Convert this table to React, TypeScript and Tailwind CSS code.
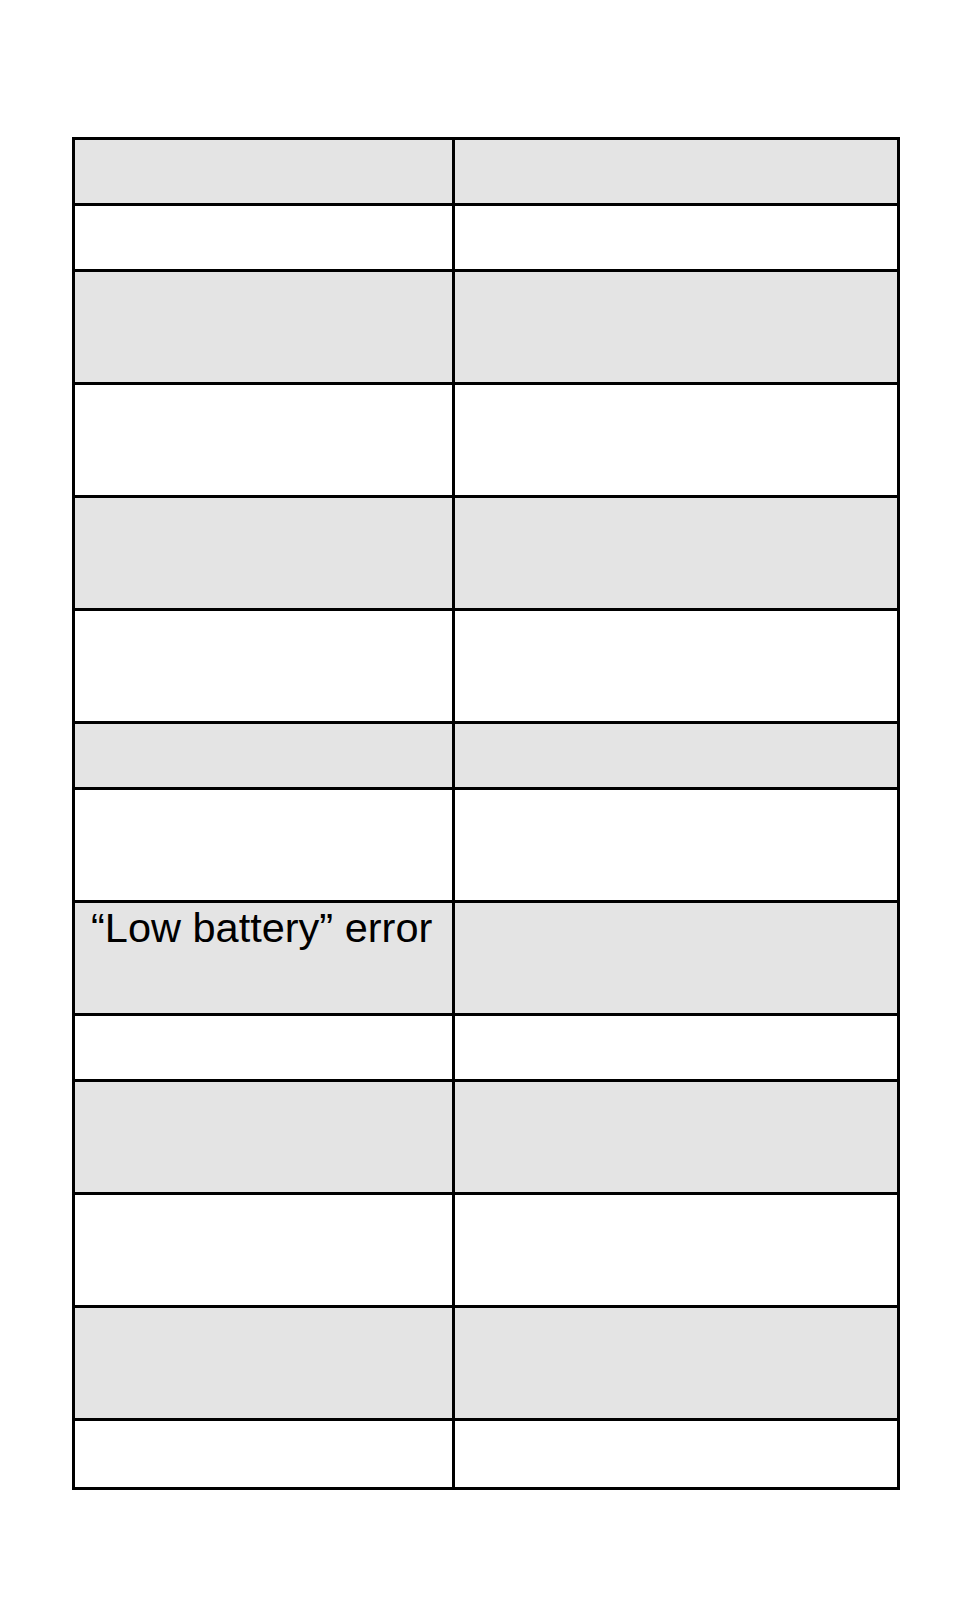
const rows: { h: string; left?: string }[] = [
  { h: "h-[66px]" },
  { h: "h-[66px]" },
  { h: "h-[113px]" },
  { h: "h-[113px]" },
  { h: "h-[113px]" },
  { h: "h-[113px]" },
  { h: "h-[66px]" },
  { h: "h-[113px]" },
  { h: "h-[113px]", left: "\u201CLow battery\u201D error" },
  { h: "h-[66px]" },
  { h: "h-[113px]" },
  { h: "h-[113px]" },
  { h: "h-[113px]" },
  { h: "h-[69px]" },
];

export default function App() {
  return (
    <div className="min-h-[1615px] w-[954px] bg-white pt-[137px] pl-[72px]" style={{ fontFamily: '"Liberation Sans", Arial, sans-serif' }}>
      <div className="grid w-[828px] grid-cols-[380px_445px] border-l-[3px] border-t-[3px] border-black">
        {rows.map((row, i) => {
          const bg = i % 2 === 0 ? "bg-[#e4e4e4]" : "bg-white";
          return (
            <div key={i} className="contents">
              <div className={`${bg} ${row.h} border-b-[3px] border-r-[3px] border-black pl-4 text-left text-[41.5px] leading-[1.2] text-black`}>
                {row.left}
              </div>
              <div className={`${bg} ${row.h} border-b-[3px] border-r-[3px] border-black`} />
            </div>
          );
        })}
      </div>
    </div>
  );
}
